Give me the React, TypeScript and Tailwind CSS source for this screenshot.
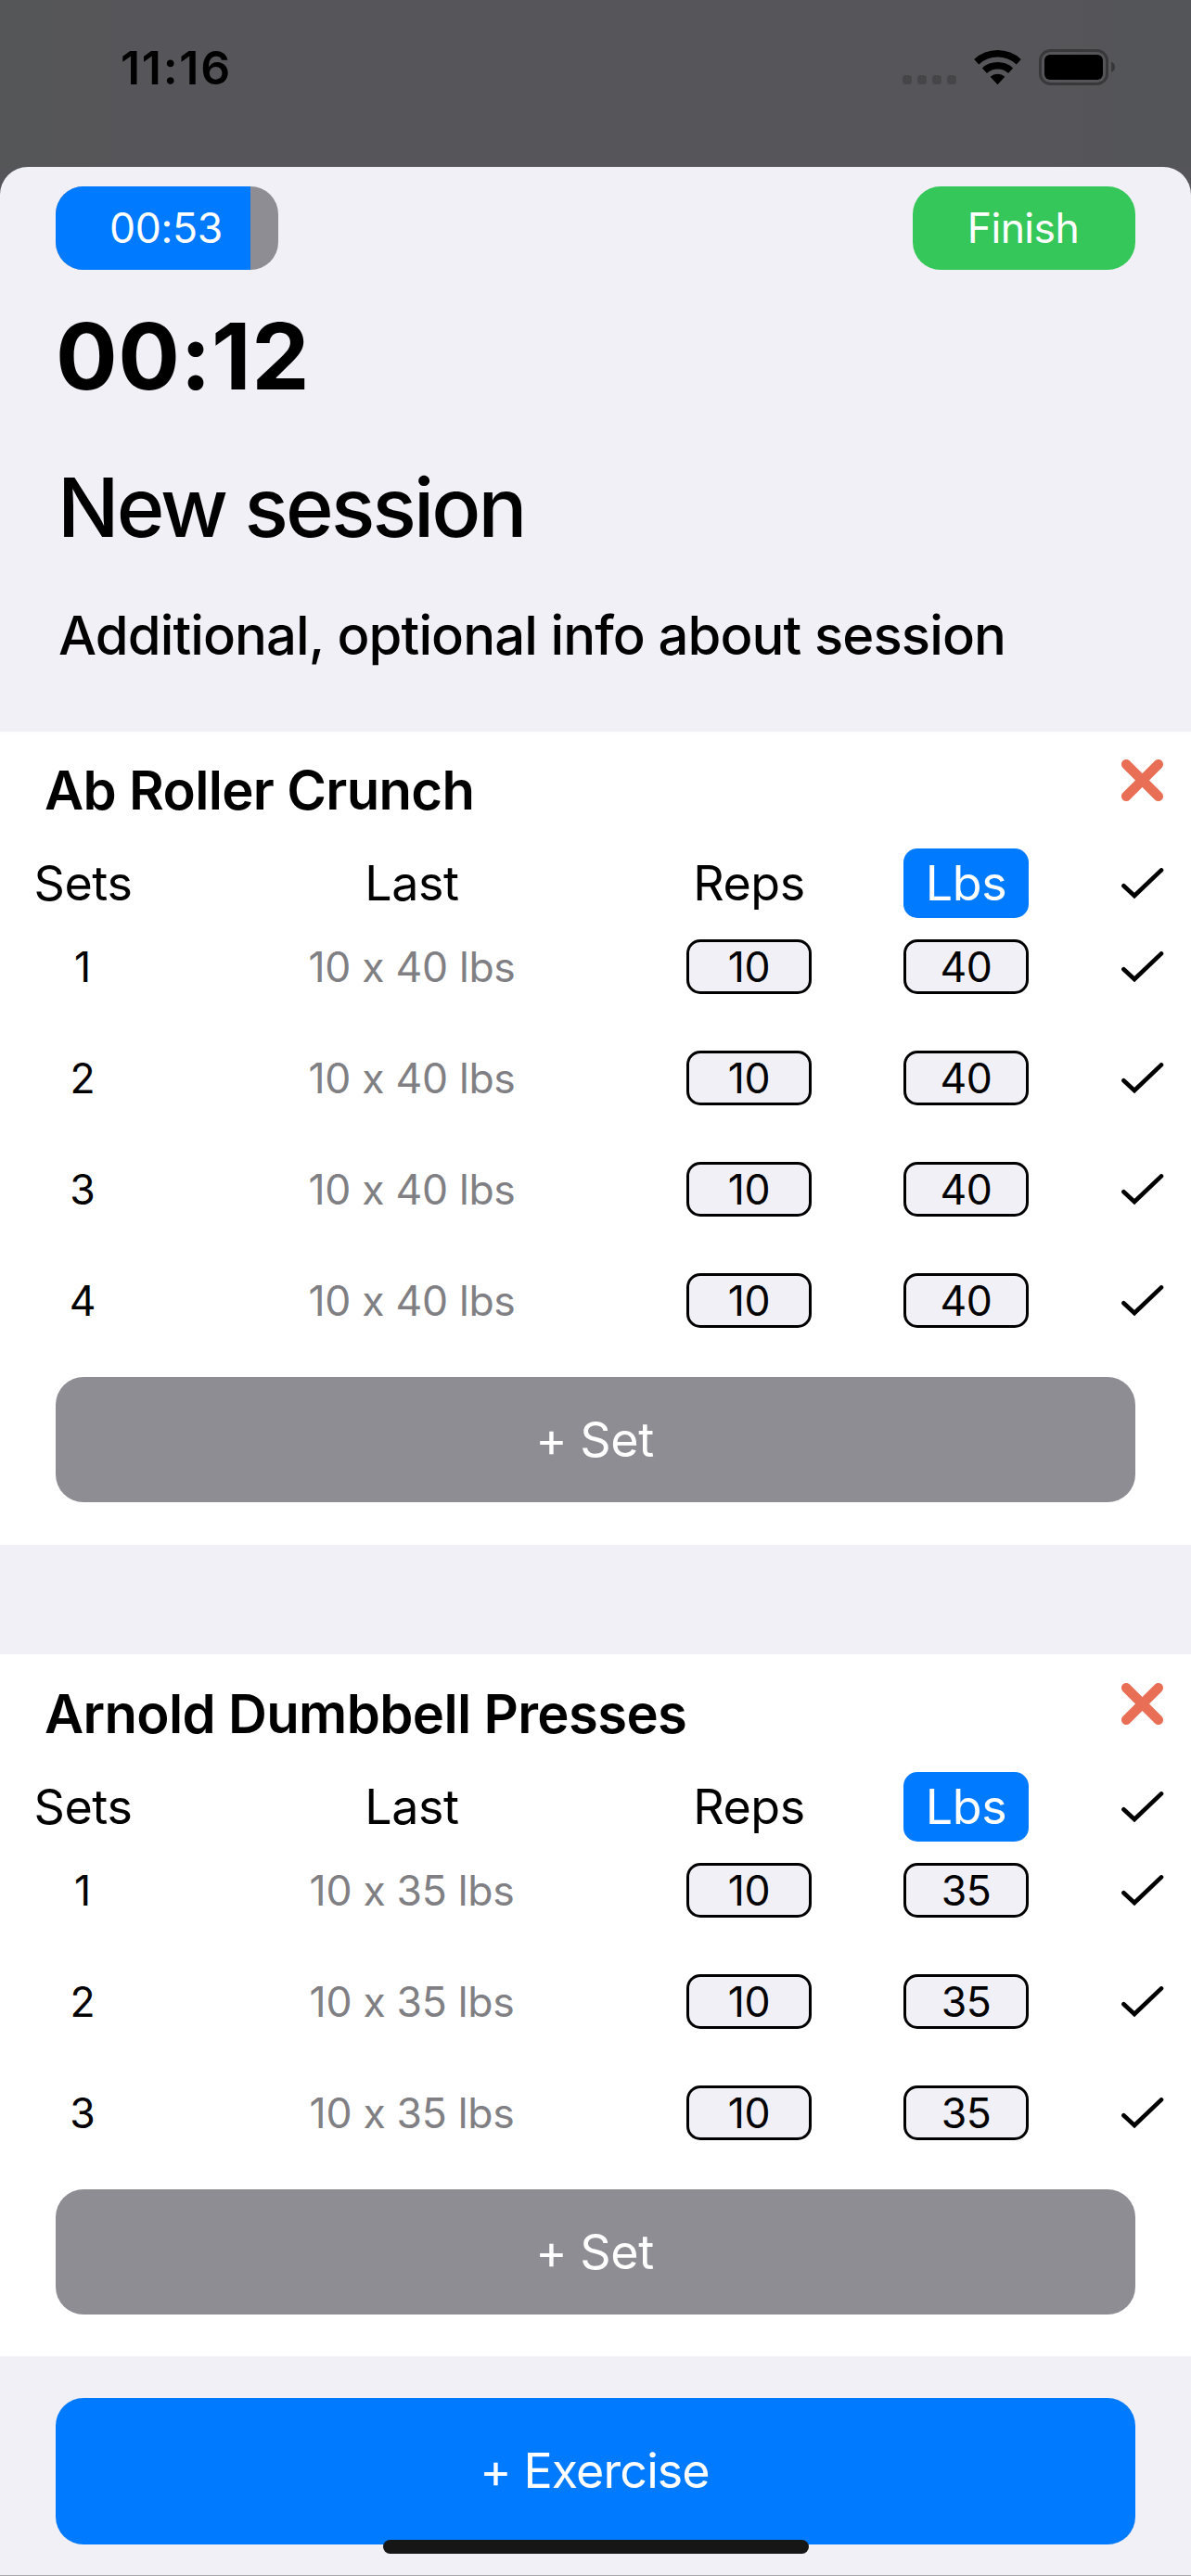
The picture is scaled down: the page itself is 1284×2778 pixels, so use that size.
import React from "react";

type Exercise = { name: string; sets: number; lbs: number };

const exercises: Exercise[] = [
  { name: "Ab Roller Crunch", sets: 4, lbs: 40 },
  { name: "Arnold Dumbbell Presses", sets: 3, lbs: 35 },
];

function Check() {
  return (
    <svg width="46" height="34" viewBox="0 0 46 34" fill="none" stroke="#000" strokeWidth="4.6" strokeLinecap="round" strokeLinejoin="miter">
      <path d="M2.4 19.2 L14 30 L43 2.4" />
    </svg>
  );
}

function Cross() {
  return (
    <svg width="46" height="46" viewBox="0 0 46 46" fill="none" stroke="#e86f55" strokeWidth="10.5" strokeLinecap="round">
      <path d="M5.2 5.2 L39.8 39.8 M39.8 5.2 L5.2 39.8" />
    </svg>
  );
}

function StatusBar() {
  return (
    <div className="flex h-[180px] justify-between bg-[linear-gradient(90deg,#555658,#565559_12%,#565559_88%,#535558)] pl-[130px] pr-[80px] pt-[43px]">
      <div className="h-[60px] text-[50px] font-semibold leading-[60px] tracking-[1.7px]">11:16</div>
      <svg width="234" height="40" viewBox="0 0 234 40" className="mt-[10px]">
        <g fill="#464648">
          <rect x="3" y="28" width="10" height="10" rx="3.5" />
          <rect x="19" y="28" width="10" height="10" rx="3.5" />
          <rect x="35" y="28" width="10" height="10" rx="3.5" />
          <rect x="51" y="28" width="10" height="10" rx="3.5" />
        </g>
        <path d="M80.2 10.9 A37.5 37.5 0 0 1 130.8 10.9 L125.8 16.4 A30 30 0 0 0 85.2 16.4 Z M88.9 20.4 A24.5 24.5 0 0 1 122.1 20.4 L117 26 A17 17 0 0 0 94 26 Z M97.6 29.7 A12 12 0 0 1 113.4 29.7 L105.5 38.3 Z" />
        <rect x="151.5" y="1.5" width="72" height="36" rx="11" fill="none" stroke="#38383a" strokeWidth="3" />
        <rect x="156" y="6" width="63" height="27" rx="6" />
        <path d="M228 13.5 C233.5 15.5 233.5 23 228 25 Z" fill="#38383a" />
      </svg>
    </div>
  );
}

function SetRow({ index, lbs }: { index: number; lbs: number }) {
  return (
    <div className="flex h-[120px] items-start text-[44.5px] leading-[60px]">
      <div className="w-[178px] text-center">{index}</div>
      <div className="w-[532px] text-center tracking-[-0.3px] text-[#808084]">10 x {lbs} lbs</div>
      <div className="ml-[30px] h-[59px] w-[135px] rounded-[15px] border-[3px] border-black bg-[#f1f0f6] text-center leading-[54px] tracking-[-0.4px]">10</div>
      <div className="ml-[99px] h-[59px] w-[135px] rounded-[15px] border-[3px] border-black bg-[#f1f0f6] text-center leading-[54px] tracking-[-0.4px]">{lbs}</div>
      <div className="ml-[100px] mt-[13px]"><Check /></div>
    </div>
  );
}

function ExerciseCard({ exercise }: { exercise: Exercise }) {
  return (
    <section className="bg-white pb-[46px] last:pt-px last:pb-[45px]">
      <div className="flex h-[126px] justify-between pl-[48px] pr-[29px]">
        <h2 className="mt-[28px] text-[58px] font-semibold leading-[70px] tracking-[-0.65px]">{exercise.name}</h2>
        <div className="mt-[30px]"><Cross /></div>
      </div>
      <div className="flex h-[98px] items-start text-[52px] leading-[75px] tracking-[-0.4px]">
        <div className="w-[179px] text-center">Sets</div>
        <div className="w-[530px] text-center">Last</div>
        <div className="ml-[31px] w-[135px] text-center">Reps</div>
        <div className="ml-[99px] h-[75px] w-[135px] rounded-[15px] bg-[#007aff] text-center text-white">Lbs</div>
        <div className="ml-[100px] mt-[21px]"><Check /></div>
      </div>
      {Array.from({ length: exercise.sets }, (_, i) => (
        <SetRow key={i} index={i + 1} lbs={exercise.lbs} />
      ))}
      <button className="mx-[60px] mt-[-8px] block h-[135px] w-[1164px] rounded-[30px] bg-[#8e8d93] pr-[2px] text-[52px] tracking-[-0.4px] text-white">+ Set</button>
    </section>
  );
}

export default function App() {
  return (
    <div className="h-[2778px] w-[1284px] overflow-hidden bg-[#565559] font-['Inter',sans-serif] text-black">
      <StatusBar />
      <main className="relative h-[2598px] rounded-t-[30px] bg-[#f1f0f6] pt-[21px]">
        <div className="flex h-[90px] justify-between px-[60px] text-[44.5px] leading-[90px] text-white">
          <div className="w-[240px] overflow-hidden rounded-[30px] bg-[#8e8d93]">
            <div className="w-[210px] bg-[#007aff] pl-[28px] text-center tracking-[-0.3px]">00:53</div>
          </div>
          <button className="w-[240px] rounded-[30px] bg-[#35c759] pr-[2px] tracking-[-0.6px]">Finish</button>
        </div>
        <div className="mt-[33px] pl-[60px] text-[99px] font-bold leading-[120px] tracking-[0.5px]">00:12</div>
        <h1 className="mt-[49px] pl-[62px] text-[88px] font-medium leading-[108px] tracking-[-2.9px]">New session</h1>
        <p className="mt-[49px] h-[139px] pl-[63px] text-[58px] font-medium leading-[70px] tracking-[-0.9px]">Additional, optional info about session</p>
        <div className="flex flex-col gap-[118px] [font-feature-settings:'calt'_0]">
          {exercises.map((e) => <ExerciseCard key={e.name} exercise={e} />)}
        </div>
        <button className="mx-[60px] mt-[45px] block h-[158px] w-[1164px] rounded-[30px] bg-[#007aff] pr-[2px] text-[52px] tracking-[-0.9px] text-white [font-feature-settings:'calt'_0]">+ Exercise</button>
        <div className="absolute bottom-[24px] left-[413px] h-[15px] w-[459px] rounded-full bg-[#161616]" />
        <div className="absolute bottom-0 left-0 h-px w-full bg-[#a8a8ac]" />
      </main>
    </div>
  );
}
